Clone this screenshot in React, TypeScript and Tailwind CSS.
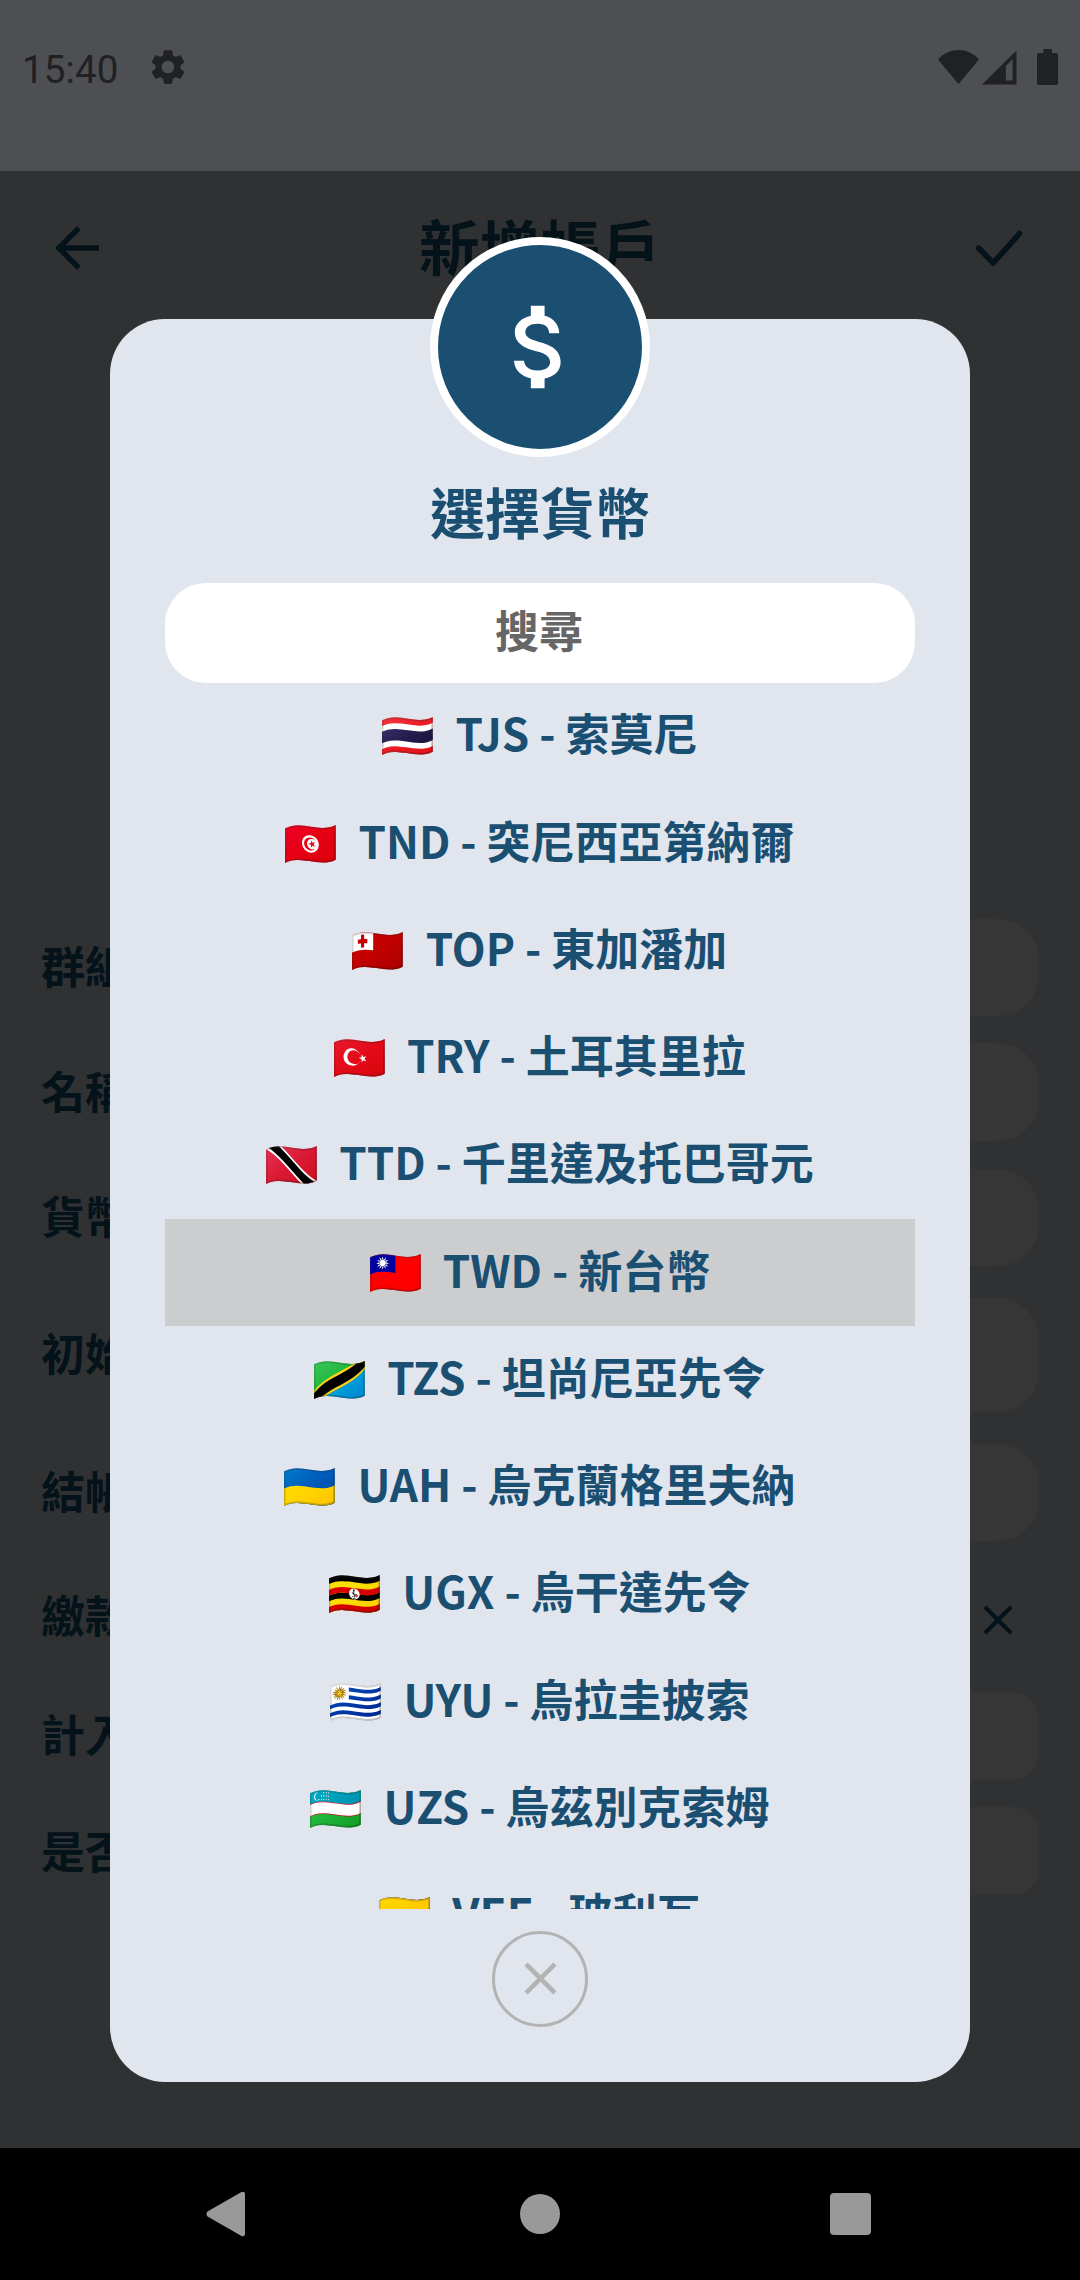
import { MdArrowBack, MdAttachMoney, MdClose, MdSettings } from "react-icons/md";

const currencies = [
  { code: "TJS", flag: "🇹🇭", name: "索莫尼" },
  { code: "TND", flag: "🇹🇳", name: "突尼西亞第納爾" },
  { code: "TOP", flag: "🇹🇴", name: "東加潘加" },
  { code: "TRY", flag: "🇹🇷", name: "土耳其里拉" },
  { code: "TTD", flag: "🇹🇹", name: "千里達及托巴哥元" },
  { code: "TWD", flag: "🇹🇼", name: "新台幣" },
  { code: "TZS", flag: "🇹🇿", name: "坦尚尼亞先令" },
  { code: "UAH", flag: "🇺🇦", name: "烏克蘭格里夫納" },
  { code: "UGX", flag: "🇺🇬", name: "烏干達先令" },
  { code: "UYU", flag: "🇺🇾", name: "烏拉圭披索" },
  { code: "UZS", flag: "🇺🇿", name: "烏茲別克索姆" },
  { code: "VEF", flag: "🇻🇪", name: "玻利瓦" },
];

const selected = "TWD";

const formRows = [
  { label: "群組", row: "h-[97px]", text: "-top-[3px]", field: "rounded-[41px]" },
  { label: "名稱", row: "mt-[27px] h-[98px]", text: "-top-[2px]", field: "rounded-[41px]" },
  { label: "貨幣", row: "mt-[28px] h-[97px]", text: "-top-[3px]", field: "rounded-[41px]" },
  { label: "初始金額", row: "mt-[32px] h-[114px]", text: "-top-[3px]", field: "rounded-[41px]" },
  { label: "結帳日", row: "mt-[32px] h-[97px]", text: "-top-[3px]", field: "rounded-[41px]" },
  { label: "繳款日", row: "mt-[30px] h-[97px]", text: "-top-[6px]", field: "" },
  { label: "計入總計", row: "mt-[24px] h-[88px]", text: "-top-[3px]", field: "rounded-[27px]" },
  { label: "是否隱藏", row: "mt-[27px] h-[88px]", text: "-top-[1px]", field: "rounded-[27px]" },
];

function StatusBar() {
  return (
    <div className="flex h-[171px] items-start bg-[#4e4f53] px-[22px] pt-[46px] text-[#202123]">
      <span className="mt-px font-[Roboto,sans-serif] text-[38.5px] leading-[46px] tracking-[0.1px]">15:40</span>
      <MdSettings className="ml-[29px] h-[42px] w-[42px]" />
      <div className="ml-auto flex items-start pt-[3px]">
        <svg viewBox="0 0 41 35" className="h-[35px] w-[41px] fill-current">
          <path d="M0 10.5C11 -2.2 30 -2.2 41 10.5L20.5 35Z" />
        </svg>
        <svg viewBox="0 0 36 36" className="ml-[3px] h-[36px] w-[35px] fill-current">
          <path fillRule="evenodd" d="M0 36L35.5 1V36ZM24.5 17V32H31.5V10Z" />
        </svg>
        <svg viewBox="0 0 21 36" className="ml-[20px] h-[36px] w-[21px] fill-current">
          <path d="M6.5 0H15V4H19Q21 4 21 6V34Q21 36 19 36H2Q0 36 0 34V6Q0 4 2 4H6.5Z" />
        </svg>
      </div>
    </div>
  );
}

function FormPage() {
  return (
    <div className="h-[1977px] bg-[#303133] font-bold text-[#04121a]">
      <header className="flex h-[154px] items-center justify-between pl-[44px] pr-[56px]">
        <MdArrowBack className="h-[66px] w-[66px]" />
        <h1 className="relative -left-[2px] -top-[3px] text-[60.5px] leading-none">新增帳戶</h1>
        <svg
          viewBox="0 0 50 40"
          className="h-[40px] w-[50px]"
          fill="none"
          stroke="currentColor"
          strokeWidth="5.6"
          strokeLinecap="round"
          strokeLinejoin="round"
        >
          <path d="M4.5 20L19.3 35L45.5 5.5" />
        </svg>
      </header>
      <div className="mt-[594px] flex flex-col pl-[41px] pr-[41px]">
        {formRows.map((r) => (
          <div key={r.label} className={`flex items-center ${r.row}`}>
            <span className={`relative w-[300px] text-[44px] leading-none ${r.text}`}>{r.label}</span>
            {r.field ? (
              <div className={`h-full flex-1 bg-[#363636] ${r.field}`} />
            ) : (
              <MdClose className="ml-auto mr-[16px] h-[50px] w-[50px]" />
            )}
          </div>
        ))}
      </div>
    </div>
  );
}

function CurrencyDialog() {
  return (
    <div className="absolute left-[110px] top-[319px] flex h-[1763px] w-[860px] flex-col items-center rounded-[55px] bg-[#e1e6ee] px-[55px] font-bold text-[#1b4f72]">
      <div className="-mt-[82px] flex h-[220px] w-[220px] shrink-0 items-center justify-center rounded-full border-8 border-white bg-[#1b4f72] text-white">
        <MdAttachMoney className="h-[110px] w-[110px]" />
      </div>
      <h2 className="h-[126.4px] shrink-0 pt-[26px] text-[55px] leading-[55px]">選擇貨幣</h2>
      <div className="flex h-[99.3px] w-full shrink-0 items-center justify-center rounded-[41px] bg-white text-[44px] leading-none text-[#666]">
        <span className="relative -left-px -top-[4px]">搜尋</span>
      </div>
      <ul className="flex h-[1226.3px] w-full shrink-0 flex-col overflow-hidden">
        {currencies.map(({ code, flag, name }) => (
          <li
            key={code}
            className={`flex h-[107.25px] shrink-0 items-center justify-center text-[44px] leading-none ${code === selected ? "bg-[#cccdcf]" : ""}`}
          >
            <span className="relative -left-[0.5px] -top-[4px] flex w-[52px] shrink-0 justify-center font-normal">{flag}</span>
            <span className="relative -top-[4px] ml-[21px] whitespace-pre">{`${code} - ${name}`}</span>
          </li>
        ))}
      </ul>
      <button className="mt-[22px] flex h-[96px] w-[96px] shrink-0 items-center justify-center rounded-full border-[3px] border-[#b3b3b3] text-[#b3b3b3]">
        <MdClose className="h-[55px] w-[55px] shrink-0" />
      </button>
    </div>
  );
}

function NavBar() {
  return (
    <nav className="flex h-[132px] items-center bg-black pl-[206px] text-[#999]">
      <svg viewBox="0 0 40 46" className="h-[46px] w-[40px] fill-current">
        <path d="M1.5 20.5L35.5 1Q39 0 39 3V43Q39 46 35.5 45L1.5 25.5Q-0.5 23 1.5 20.5Z" />
      </svg>
      <div className="ml-[274px] h-[40px] w-[40px] rounded-full bg-[#999]" />
      <div className="ml-[270px] h-[42px] w-[41px] rounded-[4px] bg-[#999]" />
    </nav>
  );
}

export default function App() {
  return (
    <div className="relative h-[2280px] w-[1080px] overflow-hidden font-['Noto_Sans_CJK_TC','Noto_Color_Emoji',sans-serif]">
      <StatusBar />
      <FormPage />
      <CurrencyDialog />
      <NavBar />
    </div>
  );
}
